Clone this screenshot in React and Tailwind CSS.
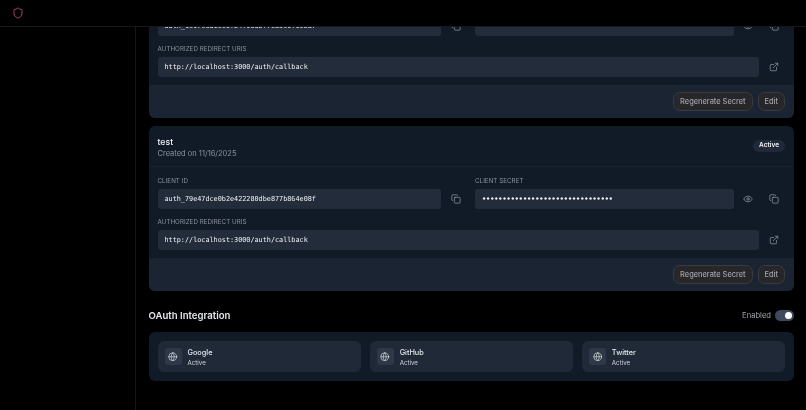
import React from "react";
import { Copy, Eye, ExternalLink, Globe, Shield } from "lucide-react";

const sans = "font-['Inter',sans-serif]";
const mono = "font-['DejaVu_Sans_Mono',monospace]";

function Label({ children }) {
  return <div className="h-[9px] text-[6.2px] leading-[9px] tracking-[0.01em] text-[#8a929e]">{children}</div>;
}

function Field({ children, dots }) {
  return (
    <div className={`flex h-5 min-w-0 flex-1 items-center rounded-[3px] bg-[#222c3a] px-[7px] text-[6.8px] text-[#f3f4f6] ${mono} ${dots ? "font-bold" : ""}`}>
      {children}
    </div>
  );
}

function IconButton({ icon: Icon }) {
  return (
    <div className="flex w-6 shrink-0 items-center justify-center text-[#9ca3af]">
      <Icon size={10} strokeWidth={1.6} />
    </div>
  );
}

function ClientCard({ id }) {
  return (
    <div className="overflow-hidden rounded-[6px] bg-[#111a27]">
      <div className="flex h-[41px] items-center justify-between border-b border-[#172130] px-[9px]">
        <div className="pt-[3px]">
          <div className="text-[8.7px] leading-[12px] font-medium text-[#f3f4f6]">test</div>
          <div className="text-[7.5px] leading-[11px] text-[#8a929e]">Created on 11/16/2025</div>
        </div>
        <div className="flex h-3 items-center rounded-full bg-[#1f2937] px-[6px] text-[6.5px] font-semibold text-[#f3f4f6]">Active</div>
      </div>
      <div className="flex flex-col px-[9px] pt-[9px] pb-2">
        <div className="flex gap-[7px]">
          <div className="flex min-w-0 flex-1 flex-col gap-1">
            <Label>CLIENT ID</Label>
            <div className="flex gap-[3px]">
              <Field>{id}</Field>
              <IconButton icon={Copy} />
            </div>
          </div>
          <div className="-mr-px flex w-[311px] shrink-0 flex-col gap-1">
            <Label>CLIENT SECRET</Label>
            <div className="flex gap-[2px]">
              <Field dots>••••••••••••••••••••••••••••••••</Field>
              <IconButton icon={Eye} />
              <IconButton icon={Copy} />
            </div>
          </div>
        </div>
        <div className="mt-2 flex flex-col gap-1">
          <Label>AUTHORIZED REDIRECT URIS</Label>
          <div className="-mr-px flex gap-[3px]">
            <Field>http://localhost:3000/auth/callback</Field>
            <IconButton icon={ExternalLink} />
          </div>
        </div>
      </div>
      <div className="flex h-[33px] items-center justify-end gap-[5px] bg-[#1a2432] px-[9px]">
        <Btn>Regenerate Secret</Btn>
        <Btn>Edit</Btn>
      </div>
    </div>
  );
}

function Btn({ children }) {
  return (
    <div className="flex h-[19px] items-center rounded-[7px] border border-[#3a3a3f] bg-[#27272a] px-[6px] text-[7.4px] font-medium text-[#a1a1aa]">
      {children}
    </div>
  );
}

function Provider({ name }) {
  return (
    <div className="flex h-[31px] items-center gap-[6px] rounded-[6px] bg-[#1f2937] px-[7px]">
      <div className="flex h-[17px] w-[17px] items-center justify-center rounded-[3px] bg-[#2d3848] text-[#e5e7eb]">
        <Globe size={9.5} strokeWidth={1.6} />
      </div>
      <div className="pt-px">
        <div className="text-[7.3px] leading-[10px] font-medium text-[#e5e7eb]">{name}</div>
        <div className="text-[6.2px] leading-[9px] text-[#d1d5db]">Active</div>
      </div>
    </div>
  );
}

export default function App() {
  return (
    <div className={`flex h-[410px] w-[806px] flex-col overflow-hidden bg-black blur-[0.35px] ${sans}`}>
      <header className="relative z-10 flex h-[27px] shrink-0 items-center border-b border-[#15171b] bg-black pl-3">
        <Shield size={12} strokeWidth={1.7} className="text-[#c0507f]" />
      </header>
      <div className="flex min-h-0 flex-1">
        <aside className="w-[136px] shrink-0 border-r border-[#15171b]" />
        <main className="min-w-0 flex-1 pr-3 pl-[12.5px]">
          <div className="-mt-[74px] flex flex-col gap-2">
            <ClientCard id="auth_1c97c6a1ec0f24f95d2f7ea9c0f1e2a7" />
            <ClientCard id="auth_79e47dce0b2e422280dbe877b864e08f" />
          </div>
          <div className="mt-[18px] flex items-center justify-between">
            <div className="text-[9.6px] leading-[14px] font-semibold text-[#e5e7eb]">OAuth Integration</div>
            <div className="flex items-center gap-1">
              <span className="text-[7.6px] text-[#9ca3af]">Enabled</span>
              <div className="flex h-[11px] w-[19px] items-center justify-end rounded-full bg-[#3f4a5f] pr-[2px]">
                <div className="h-[7px] w-[7px] rounded-full bg-white" />
              </div>
            </div>
          </div>
          <div className="mt-[9px] grid grid-cols-3 gap-[9px] rounded-[6px] bg-[#111a27] p-[9px]">
            <Provider name="Google" />
            <Provider name="GitHub" />
            <Provider name="Twitter" />
          </div>
        </main>
      </div>
    </div>
  );
}
